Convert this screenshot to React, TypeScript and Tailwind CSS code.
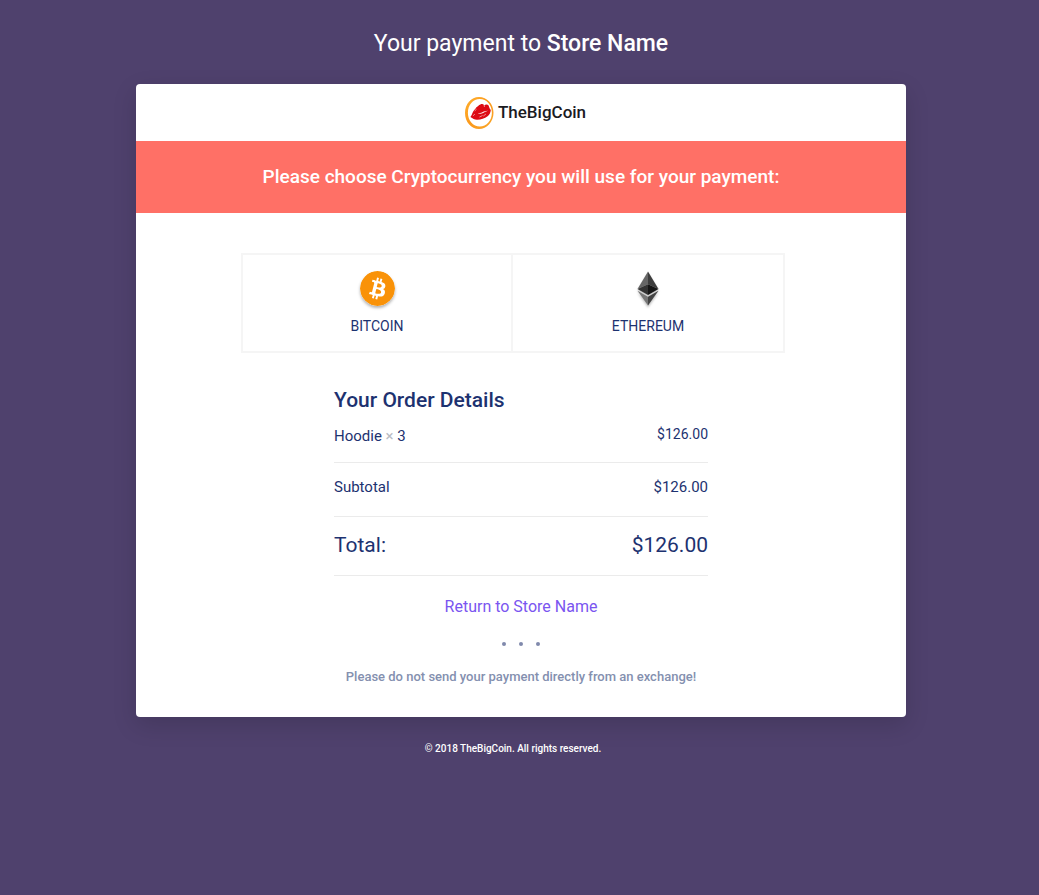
import React from "react";

function LipsLogo() {
  return (
    <svg viewBox="0 0 30 34" className="h-[34px] w-[30px]" aria-hidden="true">
      <defs>
        <linearGradient id="ring" x1="0" y1="0" x2="1" y2="1">
          <stop offset="0" stopColor="#ffb02e" />
          <stop offset="0.5" stopColor="#fb9a1c" />
          <stop offset="1" stopColor="#f9a72b" />
        </linearGradient>
      </defs>
      <path
        fill="url(#ring)"
        fillRule="evenodd"
        d="M15 1C23 1 29.500 7.800 29.500 16.800 29.500 25.800 23 33 15 33 7 33 1 25.900 1 17 1 8.100 7 1 15 1ZM15.800 3C9 3 3.900 9 3.900 16.800 3.900 24.600 9 30.600 15.800 30.600 22.600 30.600 27.900 24.600 27.900 16.800 27.900 9 22.600 3 15.800 3Z"
      />
      <path
        fill="#dd0a13"
        d="M6.400 21C7.800 19.600 8 17.600 9.200 15.600 10 13.800 11.400 13.200 12.400 11.200 14.200 10.400 14.600 8.900 16.400 8.500 17.800 7.800 19.200 7.900 20.200 9.200 21.600 8.200 23.600 8 24.600 9.400 25.200 10.600 25.200 12 26.800 14 26.600 16.600 25.600 18.600 23.600 20.200 20.600 22.600 17 23.600 13.400 23.800 10.600 24 9 22.600 6.400 21Z"
      />
      <path
        fill="#fff0f0"
        d="M13.800 17.900C15.400 16.700 16.800 17.100 18.400 16.200 20.200 15.200 21.800 15.500 23.800 14.600 22.600 15.900 20.800 16.100 19.200 17 17.400 17.900 15.600 17.600 13.800 17.900Z"
      />
      <path
        fill="none"
        stroke="#fff"
        strokeWidth="0.7"
        strokeLinecap="round"
        opacity="0.75"
        d="M15.800 20.900L18.200 19.700M19.600 19.800L21.600 18.300M11 14.600L12.200 13.500M20.200 9.300L20.400 10.600M9.200 19.600L10.600 18.400"
      />
    </svg>
  );
}

function BitcoinIcon() {
  return (
    <svg
      viewBox="0 0 32 32"
      className="size-[35px] rounded-full shadow-[0_2px_3px_rgba(0,0,0,0.3)]"
      aria-hidden="true"
    >
      <circle cx="16" cy="16" r="16" fill="#f99208" />
      <path
        fill="#fff"
        d="M23.189 14.020c.314-2.096-1.283-3.223-3.465-3.975l.708-2.840-1.728-.430-.690 2.765c-.454-.114-.920-.220-1.385-.326l.695-2.783L15.596 6l-.708 2.839c-.376-.086-.746-.170-1.104-.260l.002-.009-2.384-.595-.460 1.846s1.283.294 1.256.312c.700.175.826.638.805 1.006l-.806 3.235c.048.012.110.030.180.057l-.183-.045-1.130 4.532c-.086.212-.303.531-.793.410.018.025-1.256-.313-1.256-.313l-.858 1.978 2.250.561c.418.105.828.215 1.231.318l-.715 2.872 1.727.430.708-2.840c.472.127.930.245 1.378.357l-.706 2.828 1.728.430.715-2.866c2.948.558 5.164.333 6.097-2.333.752-2.146-.037-3.385-1.588-4.192 1.130-.260 1.980-1.003 2.207-2.538zm-3.950 5.538c-.533 2.147-4.148.986-5.320.695l.950-3.805c1.172.293 4.929.872 4.370 3.110zm.535-5.569c-.487 1.953-3.495.960-4.470.717l.860-3.450c.975.243 4.118.696 3.610 2.733z"
      />
    </svg>
  );
}

function EthereumIcon() {
  return (
    <svg
      viewBox="0 0 22 35"
      className="h-[35px] w-[22px] drop-shadow-[0_2px_1px_rgba(0,0,0,0.25)]"
      aria-hidden="true"
    >
      <path fill="#666" d="M11 0.500L0.500 18L11 13.200Z" />
      <path fill="#3d3d3d" d="M11 0.500L21.500 18L11 13.200Z" />
      <path fill="#333" d="M11 13.200L0.500 18L11 24Z" />
      <path fill="#151515" d="M11 13.200L21.500 18L11 24Z" />
      <path fill="#777" d="M0.500 19.800L11 25.800V34.500Z" />
      <path fill="#434343" d="M21.500 19.800L11 25.800V34.500Z" />
    </svg>
  );
}

const currencies = [
  { name: "BITCOIN", icon: <BitcoinIcon /> },
  { name: "ETHEREUM", icon: <EthereumIcon /> },
];

export default function App() {
  return (
    <div className="flex min-h-screen flex-col items-center bg-[#4f416d] pt-[26px] pb-10 pl-[3px] font-['Roboto',sans-serif] text-[#1d3270]">
      <h1 className="text-center text-[23px] leading-9 text-white">
        Your payment to <span className="font-medium">Store Name</span>
      </h1>

      <main className="mt-[22px] w-full max-w-[770px] overflow-hidden rounded bg-white shadow-[0_8px_24px_rgba(0,0,0,0.14)]">
        <header className="flex h-[57px] items-center justify-center gap-1 pl-2">
          <LipsLogo />
          <span className="text-[17px] font-medium text-[#1b1b1f]">TheBigCoin</span>
        </header>

        <h2 className="bg-[#ff7066] px-4 py-[22px] text-center text-[19px] leading-7 font-medium text-white">
          Please choose Cryptocurrency you will use for your payment:
        </h2>

        <div className="mt-10 pr-4">
          <div className="mx-auto grid max-w-[544px] grid-cols-2 border-2 border-[#f5f5f5]">
            {currencies.map(({ name, icon }) => (
              <button
                key={name}
                type="button"
                className="flex h-24 cursor-pointer flex-col items-center gap-2 pt-4 text-sm leading-6 not-last:border-r-2 not-last:border-[#f5f5f5]"
              >
                {icon}
                {name}
              </button>
            ))}
          </div>
        </div>

        <section className="mx-auto mt-[31px] max-w-[374px]">
          <h3 className="text-[21px] leading-8 font-medium">Your Order Details</h3>
          <table className="w-full">
            <tbody>
              <tr className="h-[46px] border-b border-[#ebebeb] align-top">
                <th scope="row" className="pt-2 text-left text-[15px] leading-6 font-normal">
                  Hoodie <span className="text-[#b9bcc4]">×</span> 3
                </th>
                <td className="pt-[6px] text-right text-sm leading-6">$126.00</td>
              </tr>
              <tr className="h-[54px] border-b border-[#ebebeb] text-[15px]">
                <th scope="row" className="pb-1 text-left font-normal">
                  Subtotal
                </th>
                <td className="pb-1 text-right">$126.00</td>
              </tr>
              <tr className="h-[59px] border-b border-[#ebebeb] text-[21px]">
                <th scope="row" className="text-left font-normal">
                  Total:
                </th>
                <td className="text-right">$126.00</td>
              </tr>
            </tbody>
          </table>
        </section>

        <div className="flex flex-col items-center px-4 pt-[19px] pb-7 text-center">
          <a href="#store" className="text-base leading-6 text-[#7a55f0]">
            Return to Store Name
          </a>
          <div className="mt-[23px] mb-[19px] flex gap-[13px]" aria-hidden="true">
            <span className="size-1 rounded-full bg-[#8089ac]" />
            <span className="size-1 rounded-full bg-[#8089ac]" />
            <span className="size-1 rounded-full bg-[#8089ac]" />
          </div>
          <p className="text-[13px] leading-6 font-medium text-[#8490af]">
            Please do not send your payment directly from an exchange!
          </p>
        </div>
      </main>

      <footer className="mt-5 pr-4 text-center text-[10px] leading-6 font-medium text-white">
        © 2018 TheBigCoin. All rights reserved.
      </footer>
    </div>
  );
}
